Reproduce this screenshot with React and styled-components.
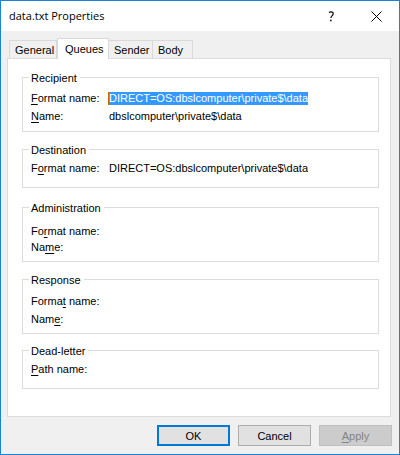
import React from "react";
import styled, { createGlobalStyle } from "styled-components";

const GlobalStyle = createGlobalStyle`
  * { box-sizing: border-box; }
  body {
    margin: 0;
    font: 11px/16px "Liberation Sans", Arial, sans-serif;
    color: #000;
  }
  button, input { font: inherit; color: inherit; }
  u {
    text-decoration-skip-ink: none;
    text-underline-offset: 2px;
    text-decoration-thickness: 1px;
  }
`;

const Dialog = styled.main`
  display: flex;
  flex-direction: column;
  min-height: 100vh;
  border: 1px solid #1883d7;
  background: #f0f0f0;
`;

const TitleBar = styled.header`
  display: flex;
  align-items: center;
  height: 30px;
  padding-left: 8px;
  background: #fff;
`;

const Title = styled.h1`
  flex: 1;
  margin: 0;
  font: 11px/16px "Open Sans", "Noto Sans", sans-serif;
`;

const CaptionButton = styled.button`
  display: flex;
  align-items: center;
  justify-content: center;
  width: 45px;
  height: 29px;
  padding: 0;
  border: 0;
  background: transparent;
`;

const Content = styled.div`
  flex: 1;
  display: flex;
  flex-direction: column;
  padding: 7px 7px 8px 6px;
`;

const TabList = styled.div`
  display: flex;
  align-items: flex-end;
  padding-left: 2px;
`;

const Tab = styled.button`
  width: ${(p) => p.$width}px;
  height: ${(p) => (p.$active ? 21 : 18)}px;
  margin-bottom: ${(p) => (p.$active ? -1 : 0)}px;
  padding: ${(p) => (p.$active ? "0 0 1px 7px" : "0 0 0 5px")};
  border: 1px solid #d9d9d9;
  border-width: ${(p) => (p.$active ? "1px 1px 0" : "1px 1px 0 0")};
  background: ${(p) => (p.$active ? "#fff" : "#f0f0f0")};
  line-height: 16px;
  text-align: left;
  z-index: ${(p) => (p.$active ? 1 : 0)};

  &:first-child { border-left-width: 1px; }
`;

const Panel = styled.section`
  flex: 1;
  display: flex;
  flex-direction: column;
  margin-right: 1px;
  padding: 12px 11px 16px 14px;
  border: 1px solid #dcdcdc;
  background: #fff;
`;

const Group = styled.fieldset`
  display: grid;
  row-gap: ${(p) => p.$gap ?? 2}px;
  min-width: 0;
  margin: 0 0 ${(p) => p.$after ?? 11}px;
  padding: ${(p) => p.$top}px 8px ${(p) => p.$bottom}px 6px;
  border: 1px solid #dcdcdc;
`;

const Legend = styled.legend`
  height: 13px;
  padding: 0 3px 0 2px;
  line-height: 14px;
`;

const Row = styled.div`
  display: grid;
  grid-template-columns: 79px minmax(0, 1fr);
  height: 16px;
`;

const Label = styled.label`
  padding-left: 2px;
  white-space: nowrap;
`;

const Value = styled.input`
  field-sizing: content;
  justify-self: start;
  align-self: center;
  max-width: 100%;
  height: 13px;
  padding: 0;
  border: 0;
  border-left: 1px solid ${(p) => (p.$selected ? "#cc6601" : "transparent")};
  outline: 0;
  background: ${(p) => (p.$selected ? "#3399ff" : "transparent")};
  color: ${(p) => (p.$selected ? "#fff" : "#000")};
  line-height: 13px;
`;

const Actions = styled.footer`
  display: flex;
  justify-content: flex-end;
  gap: 8px;
  padding-top: 8px;
`;

const ActionButton = styled.button`
  width: 73px;
  height: 21px;
  padding: 0;
  border: ${(p) => (p.$primary ? "2px solid #0078d7" : "1px solid #adadad")};
  background: #e1e1e1;
  line-height: 16px;

  &:disabled {
    border-color: #bfbfbf;
    background: #ccc;
    color: #838383;
  }
`;

const tabs = [
  { name: "General", width: 48 },
  { name: "Queues", width: 52, active: true },
  { name: "Sender", width: 44 },
  { name: "Body", width: 40 },
];

const groups = [
  {
    title: "Recipient",
    top: 6,
    bottom: 7,
    rows: [
      { id: "recipient-format", label: ["", "F", "ormat name:"], value: "DIRECT=OS:dbslcomputer\\private$\\data", selected: true },
      { id: "recipient-name", label: ["", "N", "ame:"], value: "dbslcomputer\\private$\\data" },
    ],
  },
  {
    title: "Destination",
    top: 4,
    bottom: 11,
    after: 13,
    rows: [{ id: "destination-format", label: ["F", "o", "rmat name:"], value: "DIRECT=OS:dbslcomputer\\private$\\data" }],
  },
  {
    title: "Administration",
    top: 9,
    bottom: 6,
    gap: 0,
    rows: [
      { id: "administration-format", label: ["Fo", "r", "mat name:"], value: "" },
      { id: "administration-name", label: ["Na", "m", "e:"], value: "" },
    ],
  },
  {
    title: "Response",
    top: 7,
    bottom: 6,
    after: 10,
    rows: [
      { id: "response-format", label: ["Forma", "t", " name:"], value: "" },
      { id: "response-name", label: ["Nam", "e", ":"], value: "" },
    ],
  },
  {
    title: "Dead-letter",
    top: 4,
    bottom: 11,
    rows: [{ id: "dead-letter-path", label: ["", "P", "ath name:"], value: "" }],
  },
];

export default function App() {
  return (
    <>
      <GlobalStyle />
      <Dialog>
        <TitleBar>
          <Title>data.txt Properties</Title>
          <CaptionButton aria-label="Help">
            <svg width="7" height="11" viewBox="0 0 7 11" fill="none" stroke="#000" strokeWidth="1.2">
              <path d="M1 1.4C1.6 1 2.2.8 2.9.8c1.4 0 2.3.7 2.3 1.9 0 1.9-2.3 2-2.3 4.4" />
              <path d="M2.8 8.7v1.5" strokeWidth="1.5" />
            </svg>
          </CaptionButton>
          <CaptionButton aria-label="Close">
            <svg width="11" height="11" viewBox="0 0 11 11" stroke="#000" strokeWidth="1">
              <path d="M.5.5l10 10M10.5.5l-10 10" />
            </svg>
          </CaptionButton>
        </TitleBar>
        <Content>
          <TabList role="tablist">
            {tabs.map((t) => (
              <Tab key={t.name} role="tab" aria-selected={!!t.active} $active={t.active} $width={t.width}>
                {t.name}
              </Tab>
            ))}
          </TabList>
          <Panel role="tabpanel" aria-label="Queues">
            {groups.map((g) => (
              <Group key={g.title} $top={g.top} $bottom={g.bottom} $gap={g.gap} $after={g.after}>
                <Legend>{g.title}</Legend>
                {g.rows.map(({ id, label, value, selected }) => (
                  <Row key={id}>
                    <Label htmlFor={id}>
                      {label[0]}
                      <u>{label[1]}</u>
                      {label[2]}
                    </Label>
                    <Value id={id} readOnly value={value} $selected={selected} />
                  </Row>
                ))}
              </Group>
            ))}
          </Panel>
          <Actions>
            <ActionButton $primary>OK</ActionButton>
            <ActionButton>Cancel</ActionButton>
            <ActionButton disabled>
              <u>A</u>pply
            </ActionButton>
          </Actions>
        </Content>
      </Dialog>
    </>
  );
}
